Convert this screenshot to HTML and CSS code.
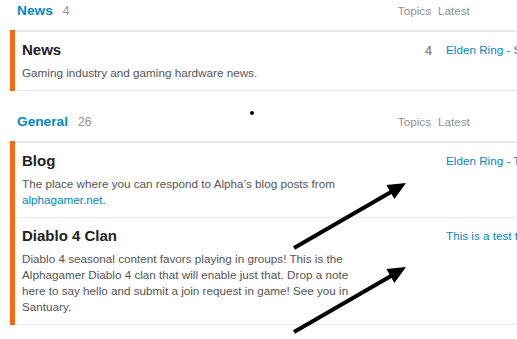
FILE: index.html
```html
<!DOCTYPE html>
<html lang="en">
<head>
<meta charset="utf-8">
<title>Categories</title>
<link rel="stylesheet" href="styles.css">
</head>
<body>
<div class="page">
  <section class="cat-section">
    <div class="cat-head">
      <div class="head-main"><a class="head-title" href="#">News</a><span class="head-count">4</span></div>
      <div class="head-topics">Topics</div>
      <div class="head-latest">Latest</div>
    </div>
    <div class="cat-list">
      <div class="cat-row">
        <div class="cat-main">
          <h3 class="cat-name">News</h3>
          <p class="cat-desc">Gaming industry and gaming hardware news.</p>
        </div>
        <div class="cat-topics">4</div>
        <div class="cat-latest"><a href="#">Elden Ring - Shadow of the Erdtree</a></div>
      </div>
    </div>
  </section>

  <section class="cat-section">
    <div class="cat-head">
      <div class="head-main"><a class="head-title" href="#">General</a><span class="head-count">26</span></div>
      <div class="head-topics">Topics</div>
      <div class="head-latest">Latest</div>
    </div>
    <div class="cat-list">
      <div class="cat-row">
        <div class="cat-main">
          <h3 class="cat-name">Blog</h3>
          <p class="cat-desc">The place where you can respond to Alpha’s blog posts from <a href="#">alphagamer.net</a>.</p>
        </div>
        <div class="cat-topics"></div>
        <div class="cat-latest"><a href="#">Elden Ring - The Tarnished Return</a></div>
      </div>
      <div class="cat-row">
        <div class="cat-main">
          <h3 class="cat-name">Diablo 4 Clan</h3>
          <p class="cat-desc">Diablo 4 seasonal content favors playing in groups! This is the Alphagamer Diablo 4 clan that will enable just that. Drop a note here to say hello and submit a join request in game! See you in Santuary.</p>
        </div>
        <div class="cat-topics"></div>
        <div class="cat-latest"><a href="#">This is a test topic</a></div>
      </div>
    </div>
  </section>

  <svg class="overlay" width="517" height="339" viewBox="0 0 517 339" aria-hidden="true">
    <circle cx="252" cy="113" r="2" fill="#000"/>
    <line x1="294" y1="248" x2="391" y2="192" stroke="#000" stroke-width="4"/>
    <polygon points="406,183 394.4,198.9 386.4,185.1" fill="#000"/>
    <line x1="294" y1="332" x2="391" y2="276" stroke="#000" stroke-width="4"/>
    <polygon points="406,267 394.4,282.9 386.4,269.1" fill="#000"/>
  </svg>
</div>
</body>
</html>
```

FILE: styles.css
```css
html, body {
  margin: 0;
  padding: 0;
  overflow: hidden;
  background: #fff;
}

body {
  font-family: "Liberation Sans", Arial, sans-serif;
  width: 517px;
  height: 339px;
}

a {
  color: #0088cc;
  text-decoration: none;
}

.page {
  position: relative;
  width: 517px;
  height: 339px;
  overflow: hidden;
}

.cat-section {
  margin-left: 10px;
  width: 640px;
  margin-bottom: 20px;
}

.cat-head {
  display: grid;
  grid-template-columns: 360px 60px 1fr;
  align-items: baseline;
  height: 30px;
  box-sizing: border-box;
  padding: 1px 0 0 7px;
  line-height: 20px;
}

.head-main {
  display: flex;
  align-items: baseline;
  gap: 10px;
}

.head-title {
  font-size: 13.7px;
  font-weight: bold;
  color: #0088cc;
}

.head-count {
  font-size: 12px;
  color: #919191;
}

.head-topics {
  font-size: 11.7px;
  color: #919191;
  text-align: right;
  padding-right: 6px;
}

.head-latest {
  font-size: 11.7px;
  color: #919191;
  padding-left: 1px;
}

.cat-list {
  border-left: 5px solid #f8680f;
}

.cat-row {
  display: grid;
  grid-template-columns: 362px 60px 1fr;
  border-bottom: 1px solid #ececec;
}

.cat-row:first-child {
  border-top: 2px solid #e9e9e9;
}

.cat-main {
  padding: 8px 10px 9px 7px;
}

.cat-name {
  margin: 0 0 5px;
  font-size: 15px;
  line-height: 20px;
  font-weight: bold;
  color: #222;
}

.cat-desc {
  margin: 0;
  font-size: 11.7px;
  line-height: 16px;
  color: #555;
}

.cat-topics {
  padding: 9px 5px 0 0;
  font-size: 12.5px;
  line-height: 20px;
  font-weight: bold;
  color: #919191;
  text-align: right;
}

.cat-latest {
  padding: 8px 0 0 9px;
  font-size: 11.7px;
  line-height: 20px;
  white-space: nowrap;
}

.overlay {
  position: absolute;
  left: 0;
  top: 0;
  pointer-events: none;
}
```
